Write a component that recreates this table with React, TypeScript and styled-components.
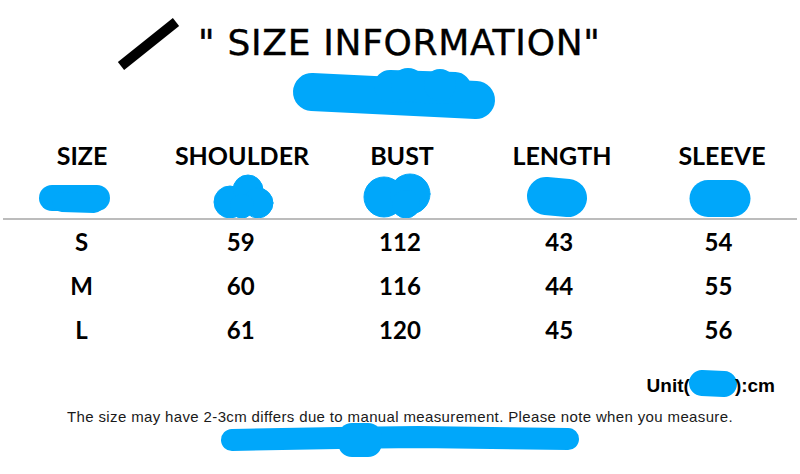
import styled, { createGlobalStyle } from 'styled-components';

const BLUE = '#00a7fa';

const GlobalStyle = createGlobalStyle`
  html, body {
    margin: 0;
    padding: 0;
    background: #ffffff;
  }
`;

const headers = ['SIZE', 'SHOULDER', 'BUST', 'LENGTH', 'SLEEVE'];

const rows = [
  ['S', '59', '112', '43', '54'],
  ['M', '60', '116', '44', '55'],
  ['L', '61', '120', '45', '56'],
];

// scribbles under each header label, drawn in a 160x46 box per column
const headerScribbles = [
  <>
    <line x1="50" y1="26" x2="95" y2="26" strokeWidth="26" />
    <line x1="60" y1="30" x2="92" y2="31" strokeWidth="20" />
  </>,
  <>
    <circle cx="68" cy="30" r="16" />
    <circle cx="86" cy="18" r="15" />
    <circle cx="96" cy="31" r="15" />
    <circle cx="80" cy="34" r="12" />
  </>,
  <>
    <circle cx="62" cy="25" r="20" />
    <circle cx="88" cy="22" r="20" />
    <circle cx="84" cy="32" r="14" />
  </>,
  <>
    <line x1="64" y1="24" x2="86" y2="26" strokeWidth="38" />
  </>,
  <>
    <line x1="66" y1="26.5" x2="90" y2="26.5" strokeWidth="37" />
  </>,
];

function App() {
  return (
    <Page>
      <GlobalStyle />
      <TitleRow>
        <Slash width="72" height="64" viewBox="0 0 72 64">
          <line x1="9" y1="54" x2="64" y2="10" stroke="#000" strokeWidth="10" />
        </Slash>
        <Title>" SIZE INFORMATION"</Title>
      </TitleRow>

      <TitleScribble width="214" height="60" viewBox="0 0 214 60">
        <g fill={BLUE} stroke={BLUE} strokeLinecap="round">
          <line x1="22" y1="30" x2="186" y2="38" strokeWidth="38" />
          <line x1="100" y1="24" x2="165" y2="26" strokeWidth="32" />
          <circle cx="118" cy="23" r="17" stroke="none" />
          <circle cx="150" cy="23" r="16" stroke="none" />
        </g>
      </TitleScribble>

      <Table>
        <HeaderRow>
          {headers.map((h, i) => (
            <HeaderCell key={h}>
              <HeaderLabel>{h}</HeaderLabel>
              <Scribble width="160" height="46" viewBox="0 0 160 46">
                <g fill={BLUE} stroke={BLUE} strokeLinecap="round">
                  {headerScribbles[i]}
                </g>
              </Scribble>
            </HeaderCell>
          ))}
        </HeaderRow>
        <Divider />
        {rows.map((r) => (
          <DataRow key={r[0]}>
            {r.map((v, i) => (
              <DataCell key={i}>{v}</DataCell>
            ))}
          </DataRow>
        ))}
      </Table>

      <UnitRow>
        <Unit>
          Unit(
          <InlineScribble width="50" height="27" viewBox="0 0 50 27">
            <line x1="14" y1="13" x2="36" y2="14" stroke={BLUE} strokeWidth="26" strokeLinecap="round" />
          </InlineScribble>
          ):cm
        </Unit>
      </UnitRow>

      <Note>The size may have 2-3cm differs due to manual measurement. Please note when you measure.</Note>

      <NoteScribble width="364" height="36" viewBox="0 0 364 36">
        <g fill={BLUE} stroke={BLUE} strokeLinecap="round" strokeLinejoin="round">
          <polyline points="14,18 120,16 200,15 350,17" fill="none" strokeWidth="22" />
          <rect x="120" y="1" width="44" height="34" rx="14" stroke="none" />
        </g>
      </NoteScribble>
    </Page>
  );
}

export default App;

const Page = styled.div`
  width: 800px;
  height: 474px;
  overflow: hidden;
  background: #ffffff;
  color: #111111;
  display: flex;
  flex-direction: column;
`;

const TitleRow = styled.div`
  display: flex;
  align-items: flex-start;
  height: 62px;
  padding-left: 112px;
`;

const Slash = styled.svg`
  display: block;
  margin-top: 12px;
  flex-shrink: 0;
`;

const Title = styled.h1`
  margin: 25px 0 0 14px;
  font-family: 'DejaVu Sans', Verdana, sans-serif;
  font-weight: normal;
  font-size: 36px;
  line-height: 1;
  letter-spacing: 0.7px;
  color: #000000;
  -webkit-text-stroke: 0.4px #000000;
  white-space: nowrap;
`;

const TitleScribble = styled.svg`
  display: block;
  margin-left: 290px;
`;

const Table = styled.div`
  margin-top: 21px;
  padding: 0 2px;
  display: flex;
  flex-direction: column;
`;

const HeaderRow = styled.div`
  display: grid;
  grid-template-columns: repeat(5, 1fr);
`;

const HeaderCell = styled.div`
  display: flex;
  flex-direction: column;
  align-items: center;
`;

const HeaderLabel = styled.div`
  font-family: Lato, 'Open Sans', sans-serif;
  font-weight: 700;
  font-size: 25px;
  line-height: 25px;
  height: 25px;
  color: #000000;
`;

const Scribble = styled.svg`
  display: block;
  margin-top: 4px;
`;

const Divider = styled.div`
  height: 2px;
  margin: 0 1px;
  background: #bcbcbc;
`;

const DataRow = styled.div`
  display: grid;
  grid-template-columns: repeat(5, 1fr);
  height: 44px;
`;

const DataCell = styled.div`
  text-align: center;
  font-family: Lato, 'Open Sans', sans-serif;
  font-weight: 700;
  font-size: 24px;
  line-height: 44px;
  color: #000000;
`;

const UnitRow = styled.div`
  margin-top: 18px;
  display: flex;
  justify-content: flex-end;
  padding-right: 25px;
`;

const Unit = styled.div`
  font-family: 'Liberation Sans', Arial, sans-serif;
  font-weight: 700;
  font-size: 19px;
  line-height: 19px;
  height: 19px;
  color: #000000;
  white-space: nowrap;
`;

const InlineScribble = styled.svg`
  display: inline-block;
  vertical-align: -5px;
  margin: 0 -3px 0 -2px;
`;

const Note = styled.p`
  margin: 20px 0 0;
  text-align: center;
  font-family: 'Liberation Sans', Arial, sans-serif;
  font-size: 15px;
  line-height: 15px;
  letter-spacing: 0.36px;
  color: #1a1a1a;
  white-space: nowrap;
`;

const NoteScribble = styled.svg`
  display: block;
  margin: -2px 0 0 218px;
`;
